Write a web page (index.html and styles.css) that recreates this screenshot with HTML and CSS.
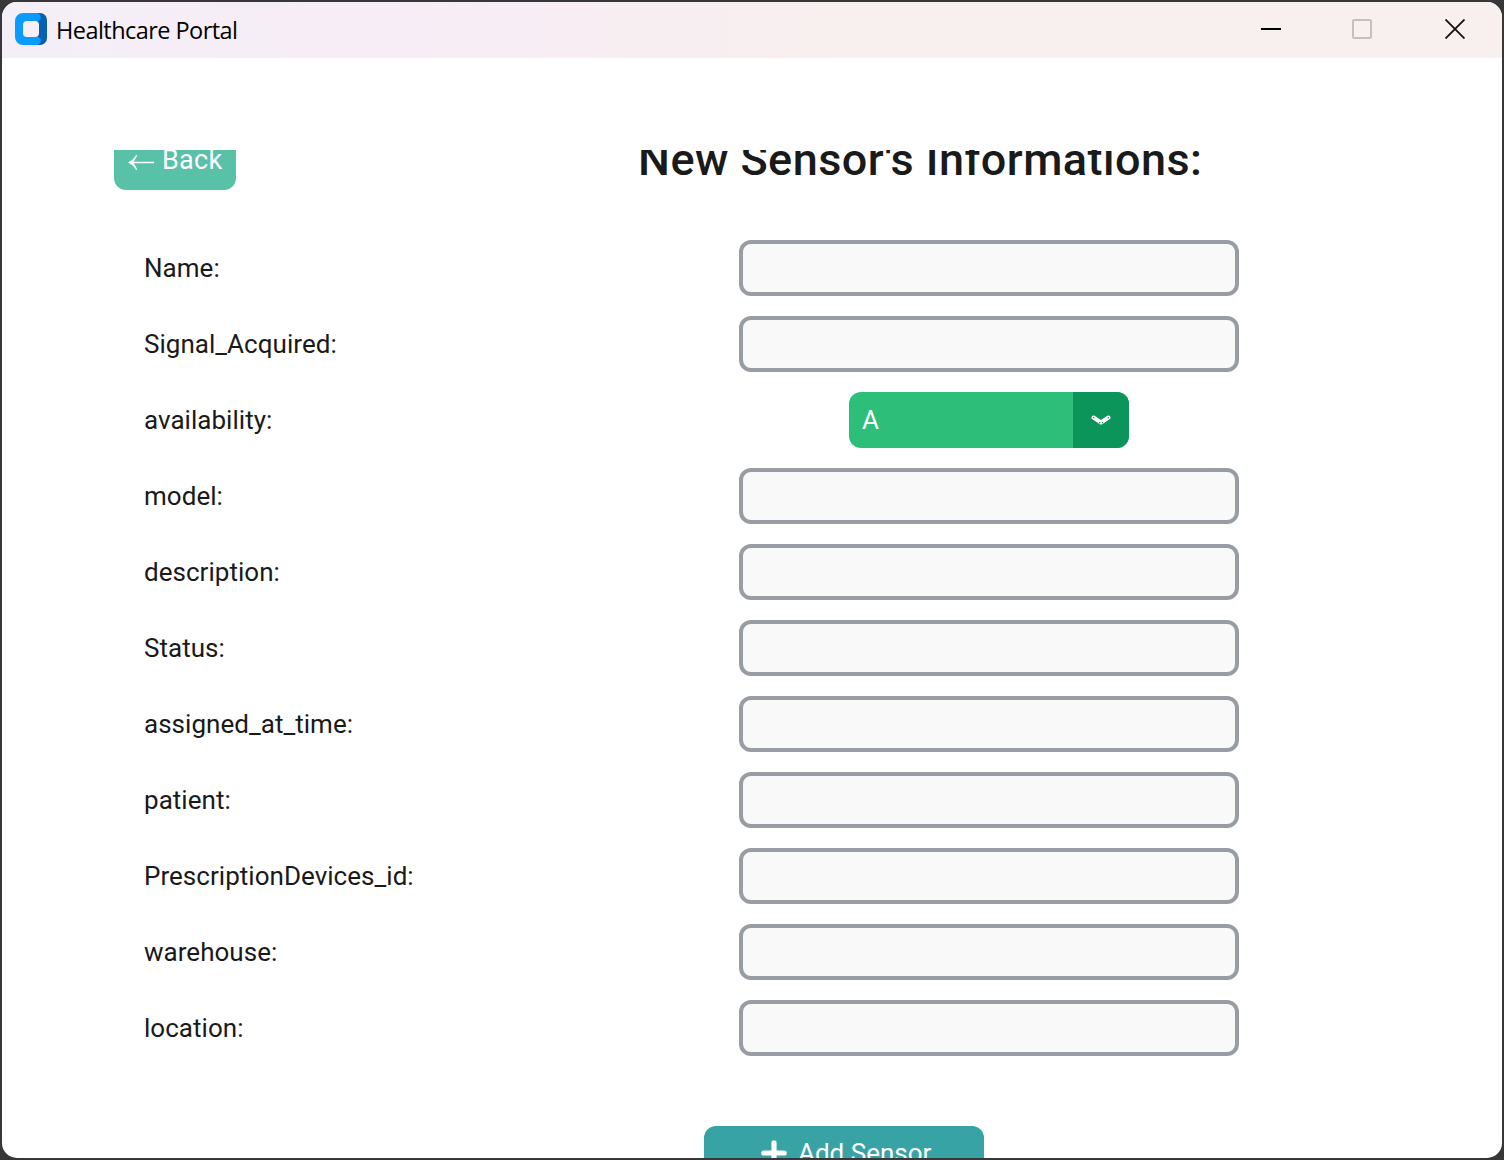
FILE: index.html
```html
<!DOCTYPE html>
<html lang="en">
<head>
<meta charset="utf-8">
<title>Healthcare Portal</title>
<link rel="stylesheet" href="styles.css">
</head>
<body>
<div class="window">
  <header class="titlebar">
    <svg class="app-icon" width="32" height="32" viewBox="0 0 32 32">
      <rect x="12" width="20" height="32" rx="7" fill="#0560b0"/>
      <path d="M8 0h13.500a4.200 4.200 0 0 1 0 8.400V23.600a4.200 4.200 0 0 1 0 8.400H8a8 8 0 0 1-8-8V8a8 8 0 0 1 8-8z" fill="#0a9bff"/>
      <rect x="8" y="8" width="16" height="16" rx="4" fill="#f6eff7"/>
    </svg>
    <span class="title">Healthcare Portal</span>
    <div class="controls">
      <svg width="20" height="20" viewBox="0 0 20 20"><path d="M0 10h20" stroke="#000" stroke-width="2"/></svg>
      <svg width="20" height="20" viewBox="0 0 20 20"><rect x="1" y="1" width="18" height="18" rx="1.500" fill="none" stroke="#c6bfc0" stroke-width="2"/></svg>
      <svg width="20" height="20" viewBox="0 0 20 20"><path d="M.5.5l19 19M19.500.5l-19 19" stroke="#111" stroke-width="1.800"/></svg>
    </div>
  </header>
  <main class="scroll">
    <div class="top">
      <button class="back"><svg width="26" height="16" viewBox="0 0 26 16"><path d="M3 8.500h23" stroke="#fff" stroke-width="1.300"/><path d="M0 8.500Q5.500 6 8 1l1.200.6Q7.500 5.500 5 8.500q2.500 3 4.200 6.900L8 16Q5.500 11 0 8.500z" fill="#fff"/></svg><span>Back</span></button>
      <h1>New Sensor's Informations:</h1>
    </div>
    <form class="form">
      <label class="row"><span class="label">Name:</span><input class="field" type="text"></label>
      <label class="row"><span class="label">Signal_Acquired:</span><input class="field" type="text"></label>
      <div class="row"><span class="label">availability:</span>
        <div class="select"><span class="value">A</span><span class="arrow"><svg width="20" height="12" viewBox="0 0 20 12"><path d="M2.500 3.500l7.500 5 7.500-5" fill="none" stroke="#fff" stroke-width="4" stroke-linecap="round" stroke-linejoin="round"/><path d="M2 3h1.300v1.300H2zM16.700 3H18v1.300h-1.300zM8 8h1.300v1.300H8zM10.700 8H12v1.300h-1.300z" fill="#0c955a"/></svg></span></div>
      </div>
      <label class="row"><span class="label">model:</span><input class="field" type="text"></label>
      <label class="row"><span class="label">description:</span><input class="field" type="text"></label>
      <label class="row"><span class="label">Status:</span><input class="field" type="text"></label>
      <label class="row"><span class="label">assigned_at_time:</span><input class="field" type="text"></label>
      <label class="row"><span class="label">patient:</span><input class="field" type="text"></label>
      <label class="row"><span class="label">PrescriptionDevices_id:</span><input class="field" type="text"></label>
      <label class="row"><span class="label">warehouse:</span><input class="field" type="text"></label>
      <label class="row"><span class="label">location:</span><input class="field" type="text"></label>
    </form>
    <button class="add"><svg width="26" height="26" viewBox="0 0 26 26"><path d="M13 2.800v20.400M2.800 13h20.400" stroke="#fff" stroke-width="5.200" stroke-linecap="round"/></svg><span>Add Sensor</span></button>
  </main>
</div>
</body>
</html>
```
FILE: styles.css
```css
* { box-sizing: border-box; }
body {
  margin: 0;
  padding: 2px;
  height: 1160px;
  overflow: hidden;
  background: #373737;
  font-family: Roboto, sans-serif;
  color: #1a1a1a;
}
.window {
  display: flex;
  flex-direction: column;
  width: 1500px;
  height: 1156px;
  border-radius: 15px;
  overflow: hidden;
  background: #fff;
}
.titlebar {
  display: flex;
  align-items: center;
  flex: none;
  height: 56px;
  padding: 0 37px 2px 13px;
  background: linear-gradient(90deg, #f4eff6 0, #f7edf6 28%, #f8efef 55%, #f8efef 100%);
}
.app-icon { flex: none; }
.title {
  margin: 2px 0 0 9px;
  font: 23.500px "Open Sans", sans-serif;
  letter-spacing: -0.550px;
  color: #000;
}
.controls { display: flex; margin-left: auto; }
.controls svg + svg { margin-left: 71px; }
.controls svg + svg + svg { margin-left: 73px; }
.scroll {
  display: flex;
  flex-direction: column;
  flex: 1;
  min-height: 0;
  margin-top: 92px;
  padding-left: 112px;
  overflow: hidden;
}
.top {
  display: flex;
  align-items: center;
  flex: none;
  height: 56px;
  margin-top: -16px;
}
button { border: 0; color: #fff; font: 26px Roboto, sans-serif; }
.back {
  display: flex;
  align-items: center;
  flex: none;
  width: 122px;
  height: 56px;
  padding: 0 0 4px 14px;
  gap: 8px;
  border-radius: 12px;
  background: #58c1a8;
  font-size: 27px;
  letter-spacing: 0.300px;
}
.back svg { position: relative; top: 2px; }
h1 {
  margin: 0 0 4px 402px;
  font-size: 45px;
  line-height: 52px;
  letter-spacing: 0.450px;
  font-weight: 500;
  white-space: nowrap;
}
.form {
  display: flex;
  flex-direction: column;
  flex: none;
  gap: 20px;
  margin: 50px 0 0;
  padding-left: 30px;
}
.row {
  display: grid;
  grid-template-columns: 595px 500px;
  align-items: center;
  height: 56px;
}
.label { font-size: 26px; letter-spacing: 0.030px; }
.field {
  width: 500px;
  height: 56px;
  border: 4px solid #979da2;
  border-radius: 12px;
  background: #f9f9fa;
}
.select {
  display: flex;
  justify-self: center;
  width: 280px;
  height: 56px;
  border-radius: 12px;
  overflow: hidden;
  background: #2dbe79;
}
.value {
  flex: 1;
  padding-left: 13px;
  font-size: 26px;
  line-height: 56px;
  color: #fff;
}
.arrow {
  display: flex;
  align-items: center;
  justify-content: center;
  width: 56px;
  background: #0c955a;
}
.add {
  display: flex;
  align-items: center;
  flex: none;
  width: 280px;
  height: 56px;
  margin: 70px 0 0 590px;
  padding: 0 0 3px 57px;
  gap: 11px;
  border-radius: 12px;
  background: #38a3a5;
}
```
